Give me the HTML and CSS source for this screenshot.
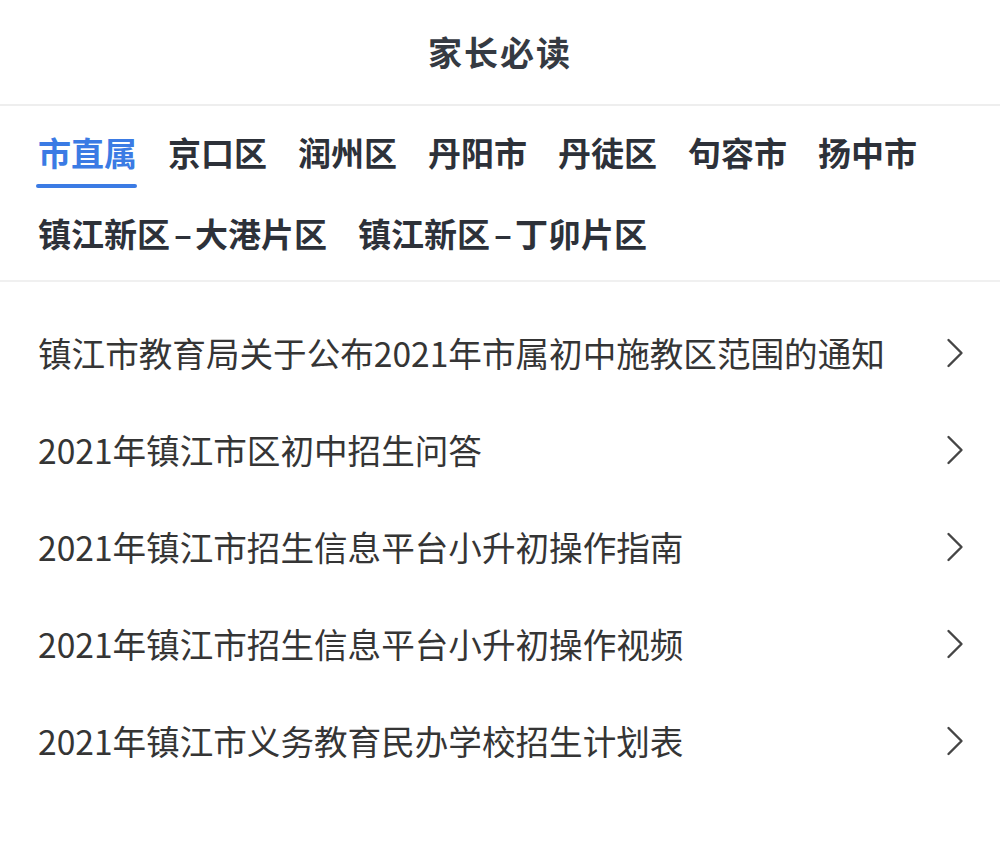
FILE: index.html
```html
<!DOCTYPE html>
<html lang="zh-CN">
<head>
<meta charset="utf-8">
<title>家长必读</title>
<link rel="stylesheet" href="styles.css">
</head>
<body>
<div class="page">
  <header class="header"><h1 class="title">家长必读</h1></header>
  <nav class="tabs">
    <span class="tab active">市直属</span>
    <span class="tab">京口区</span>
    <span class="tab">润州区</span>
    <span class="tab">丹阳市</span>
    <span class="tab">丹徒区</span>
    <span class="tab">句容市</span>
    <span class="tab">扬中市</span>
    <span class="tab">镇江新区<span class="dash">–</span>大港片区</span>
    <span class="tab">镇江新区<span class="dash">–</span>丁卯片区</span>
  </nav>
  <ul class="list">
    <li class="item"><span class="item-text">镇江市教育局关于公布2021年市属初中施教区范围的通知</span><svg class="chev" viewBox="0 0 18 30" width="18" height="30"><path d="M2.5 2 L15.5 15 L2.5 28" fill="none"/></svg></li>
    <li class="item"><span class="item-text">2021年镇江市区初中招生问答</span><svg class="chev" viewBox="0 0 18 30" width="18" height="30"><path d="M2.5 2 L15.5 15 L2.5 28" fill="none"/></svg></li>
    <li class="item"><span class="item-text">2021年镇江市招生信息平台小升初操作指南</span><svg class="chev" viewBox="0 0 18 30" width="18" height="30"><path d="M2.5 2 L15.5 15 L2.5 28" fill="none"/></svg></li>
    <li class="item"><span class="item-text">2021年镇江市招生信息平台小升初操作视频</span><svg class="chev" viewBox="0 0 18 30" width="18" height="30"><path d="M2.5 2 L15.5 15 L2.5 28" fill="none"/></svg></li>
    <li class="item"><span class="item-text">2021年镇江市义务教育民办学校招生计划表</span><svg class="chev" viewBox="0 0 18 30" width="18" height="30"><path d="M2.5 2 L15.5 15 L2.5 28" fill="none"/></svg></li>
  </ul>
</div>
</body>
</html>
```

FILE: styles.css
```css
* { box-sizing: border-box; }
html, body {
  margin: 0;
  padding: 0;
  background: #ffffff;
}
body {
  font-family: "Noto Sans CJK SC", "Noto Sans", sans-serif;
  color: #333333;
}
.page {
  width: 1000px;
}
.header {
  height: 106px;
  display: flex;
  align-items: center;
  justify-content: center;
  border-bottom: 2px solid #eeeeee;
}
.title {
  margin: 0;
  font-size: 34px;
  line-height: 40px;
  font-weight: 700;
  letter-spacing: 2px;
  color: #353a42;
}
.tabs {
  display: flex;
  flex-wrap: wrap;
  column-gap: 31px;
  row-gap: 41px;
  padding: 26px 20px 27px 38px;
  border-bottom: 2px solid #f0f0f0;
}
.tab {
  position: relative;
  font-size: 33px;
  line-height: 40px;
  font-weight: 700;
  color: #2d3139;
  white-space: nowrap;
}
.dash {
  padding: 0 3px 0 4px;
}
.tab.active {
  color: #3b7be4;
}
.tab.active::after {
  content: "";
  position: absolute;
  left: -2px;
  right: 0;
  bottom: -16px;
  height: 4px;
  border-radius: 2px;
  background: #3b7be4;
}
.list {
  list-style: none;
  margin: 0;
  padding: 22px 0 0 0;
}
.item {
  height: 97px;
  display: flex;
  align-items: center;
  justify-content: space-between;
  padding: 0 36px 0 38px;
}
.item-text {
  font-size: 33.6px;
  line-height: 40px;
  color: #353535;
  white-space: nowrap;
}
.chev path {
  stroke: #454545;
  stroke-width: 2.4;
  stroke-linecap: round;
  stroke-linejoin: round;
}
```
